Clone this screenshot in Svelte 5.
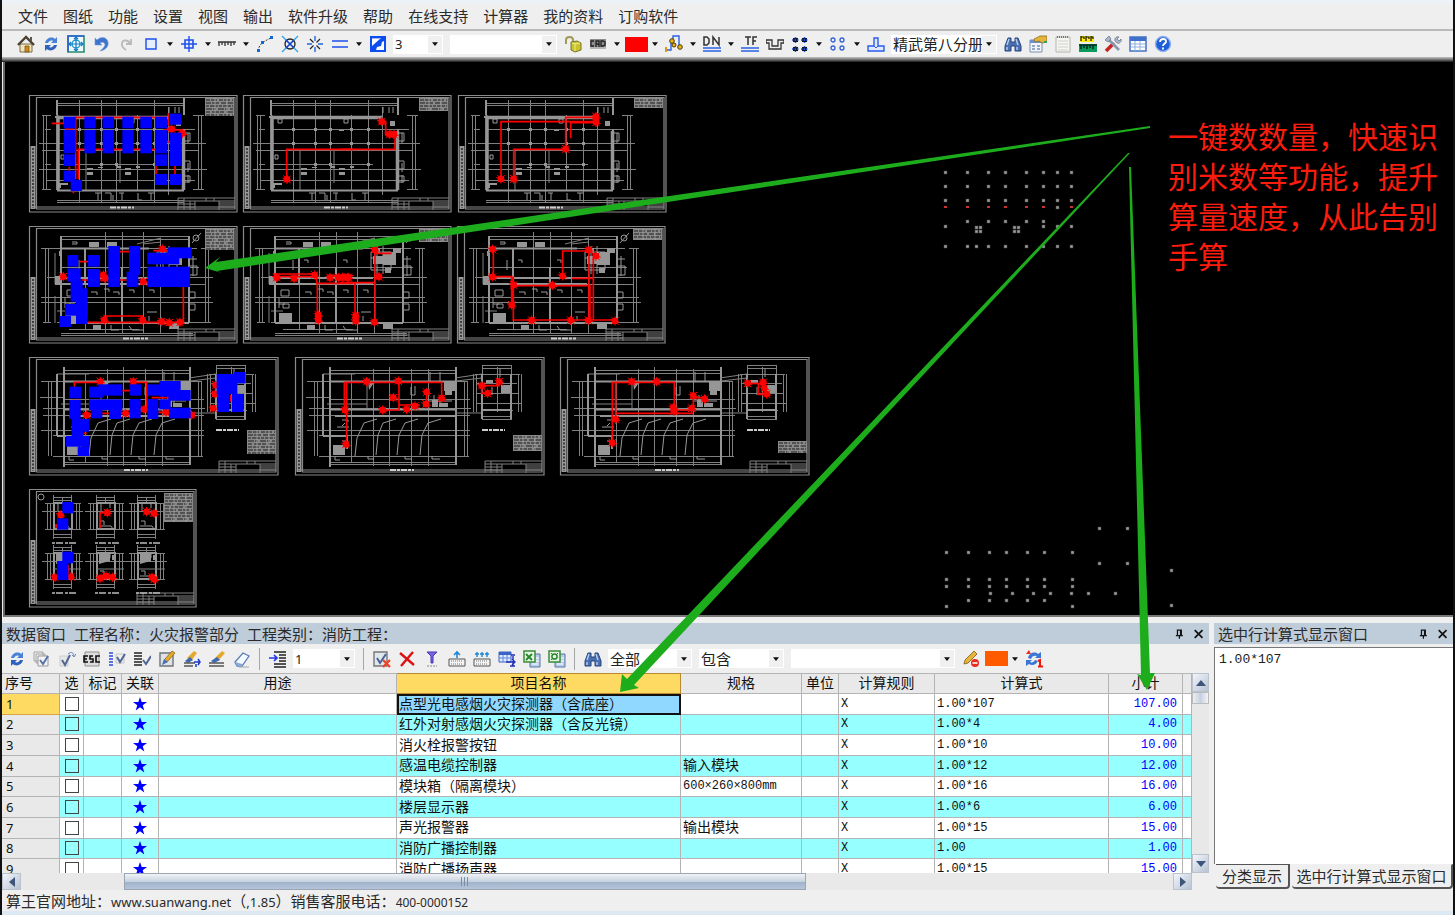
<script>
  const menus = ['文件', '图纸', '功能', '设置', '视图', '输出', '软件升级', '帮助', '在线支持', '计算器', '我的资料', '订购软件'];

  const icons = {
    home: '<path d="M3 9h12v8H3z" fill="#f3e3b8" stroke="#7a6a4a"/><path d="M1 10L9 2l8 8" fill="none" stroke="#4b4032" stroke-width="2.4"/><path d="M13 2h2v4h-2z" fill="#555"/><path d="M8 11h4v6H8z" fill="#d08a1c" stroke="#6b4a16" stroke-width=".7"/>',
    refresh: '<path d="M3 8c1-5 7-7 10-4l2-2v6H9l2-2c-2-1-4 0-5 2z" fill="#4a82d8"/><path d="M15 10c-1 5-7 7-10 4l-2 2v-6h6l-2 2c2 1 4 0 5-2z" fill="#2f62bd"/>',
    target: '<path d="M1 1h16v16H1z" fill="#eef8ff" stroke="#2a8c6a" stroke-width="1.6"/><path d="M1 17V1h16" fill="none" stroke="#2b62d8" stroke-width="1.6"/><circle cx="9" cy="9" r="4" fill="none" stroke="#1c9cc4" stroke-width="1.4"/><path d="M9 2v14M2 9h14M7 4l2-2 2 2M7 14l2 2 2-2M4 7L2 9l2 2M14 7l2 2-2 2" fill="none" stroke="#1478c8" stroke-width="1.2"/>',
    undo: '<path d="M3 3v7h7L8 8c3-2 5 0 5 2-1 3-3 4-5 6 6-1 9-5 8-9C15 2 9 1 5 5z" fill="#3f74cc" stroke="#6f98de" stroke-width=".6"/>',
    redo: '<path d="M14 4v5H9M13 9C12 5 6 4 5 8c-1 3 1 5 4 7" fill="none" stroke="#b9b9b9" stroke-width="1.8"/>',
    square: '<path d="M4 4h10v10H4z" fill="#e6eefc" stroke="#1c50ee" stroke-width="1.4"/>',
    cross: '<path d="M5 5h8v8H5z" fill="none" stroke="#1c50ee" stroke-width="1.6"/><path d="M9 1v16M1 9h16" stroke="#1c50ee" stroke-width="1.4"/>',
    ticks: '<path d="M0 7h18M1 7v4M4 7v3M7 7v4M10 7v3M13 7v4M16 7v3" stroke="#333" stroke-width="1.3"/>',
    curve: '<path d="M2 16c1-6 4-9 13-13" fill="none" stroke="#333" stroke-dasharray="2 1.4"/><path d="M1 14h3v3H1zM5 6h3v3H5zM14 1h3v3h-3z" fill="#1169d8"/>',
    circlex: '<path d="M1 1l16 16M17 1L1 17" stroke="#2ba2e8" stroke-width="1.2"/><circle cx="9" cy="9" r="5" fill="none" stroke="#222" stroke-width="1.3"/><path d="M5 5l8 8M13 5l-8 8" stroke="#1c40c8" stroke-width="1.4"/>',
    star: '<path d="M9 1v5M9 12v5M1 9h5M12 9h5" stroke="#1c6ae0" stroke-width="1.4"/><path d="M4 4l3.500 3.500M14 4l-3.500 3.500M4 14l3.500-3.500M14 14l-3.500-3.500" stroke="#222" stroke-width="1.2"/>',
    lines: '<path d="M1 6h16M1 12h16" stroke="#1c50ee" stroke-width="1.4"/>',
    diag: '<path d="M1 1h16v16H1z" fill="#0c4cf0"/><path d="M3 3h9L3 11z" fill="#fff"/><path d="M7 15l1-3 4-1 1-4 2-1v9z" fill="#fff"/><path d="M3 3h8v1H3z" fill="#0c4cf0" opacity=".4"/>',
    lock: '<path d="M2 9V5c0-4 7-4 7 0v3" fill="none" stroke="#a09a56" stroke-width="2"/><path d="M7 7l6-1 4 2v7l-6 2-4-2z" fill="#c9c22c" stroke="#77752c"/><path d="M11 9v7M8 8l3 1 5-1" stroke="#f1ee8c" fill="none"/>',
    cad: '<path d="M1 4h16v10H1z" fill="#8c8c8c"/><path d="M5 6H2v5h3M7 12V6h3v6M7 9h3M12 6v5h2l2-1V7l-2-1z" fill="none" stroke="#222" stroke-width="1.3"/><path d="M1 13h16" stroke="#ddd"/>',
    route: '<path d="M1 15h5V8M8 4V1h6v10h2" fill="none" stroke="#2b62e8" stroke-width="1.4"/><circle cx="7" cy="6" r="2.300" fill="#eab212" stroke="#4d3a08"/><circle cx="15" cy="12" r="2.300" fill="#eab212" stroke="#4d3a08"/><circle cx="9" cy="10" r="2" fill="#eab212" stroke="#4d3a08"/><path d="M1 12v5" stroke="#d89a10" stroke-width="2"/>',
    dn: '<path d="M1 2v8h3l2-2V4L4 2zM10 10V2l6 8V2" fill="none" stroke="#333" stroke-width="1.500"/><path d="M0 13h18M0 16h18" stroke="#2b62e8" stroke-width="1.300"/>',
    tf: '<path d="M4 2h6M7 2v8M12 10V2h4M12 6h3" fill="none" stroke="#333" stroke-width="1.500"/><path d="M0 13h18M0 16h18" stroke="#2b62e8" stroke-width="1.300"/>',
    pipe: '<path d="M0 5h6v6h6V5h6M0 8h3v6h12V8h3M0 5v3M18 5v3" fill="none" stroke="#333" stroke-width="1.300"/>',
    dots: '<path d="M2 3h5v4H2zM11 3h5v4h-5zM2 12h5v4H2zM11 12h5v4h-5z" fill="#111"/><path d="M1 5h7M10 5h7M1 14h7M10 14h7M4.500 2v6M13.500 2v6M4.500 11v6M13.500 11v6" stroke="#1b55e8" stroke-width="1.400" stroke-dasharray="1.500 1"/>',
    rings: '<g fill="#e8eefc" stroke="#3562cf" stroke-width="1.300"><circle cx="4" cy="5" r="2"/><circle cx="13" cy="5" r="2"/><circle cx="4" cy="13" r="2"/><circle cx="13" cy="13" r="2"/></g>',
    tee: '<path d="M7 3h4v8h6v5H1v-5h6z" fill="#dfe8ff" stroke="#2b5ce8" stroke-width="1.400"/><path d="M7 11l2 2 2-2" fill="none" stroke="#2b5ce8"/>',
    binoc: '<path d="M4 3h3v4h4V3h3l3 8v5h-6v-5H7v5H1v-5z" fill="#4a6fae" stroke="#24457f"/><path d="M3 10l2-6M12 4l2 6M3 12v3M13 12v3" stroke="#b9cdf0" stroke-width="1.400"/>',
    card: '<path d="M1 5h12v12H1z" fill="#f2f5fa" stroke="#7f8fae"/><path d="M1 5h12v3H1z" fill="#6e93cf"/><path d="M3 11h3M8 11h3M3 14h3M8 14h3" stroke="#7890b8" stroke-width="1.500"/><path d="M5 4l6-3h7v6l-5 1-3-2-4 1z" fill="#e3b53c" stroke="#8d6d1d" stroke-width=".8"/><path d="M15 6h3v2h-3z" fill="#3c9a5c"/>',
    page: '<path d="M2 2h14v15H2z" fill="#f5f5f1" stroke="#b4b4ac"/><path d="M3 2h12" stroke="#77776f" stroke-dasharray="1 1" stroke-width="2"/><path d="M4 6h10M4 9h10M4 12h10M4 15h10" stroke="#cfd2cc"/>',
    gauge: '<path d="M1 1h14v6H1z" fill="#ffee10"/><path d="M2 1v5M2 2h3v2M7 1v5M7 2h3v2M12 1v5M12 2h2v2" stroke="#111" fill="none" stroke-width="1.200"/><path d="M0 9h18v8H0z" fill="#0c9a5c"/><path d="M2 10v4M5 10v3M8 10v4M11 10v3M14 10v4M0 10h18" stroke="#032" stroke-width="1.600"/>',
    tools: '<path d="M2 16l8-8" stroke="#c92222" stroke-width="3.500"/><path d="M3 3l12 12" stroke="#8798ad" stroke-width="2.600"/><path d="M1 5l4-4 2 3-3 3zM11 6c-1-3 2-5 4-4l-2 2 2 2 2-2c1 3-2 5-4 4z" fill="#a9b8cc" stroke="#5f6f86" stroke-width=".7"/>',
    table: '<path d="M1 2h16v14H1z" fill="#fff" stroke="#4672c4" stroke-width="1.500"/><path d="M1 2h16v4H1z" fill="#3e70cc"/><path d="M2 9h14M2 12h14M6 6v10M11 6v10" stroke="#8faee0"/>',
    help: '<circle cx="9" cy="9" r="7.500" fill="#1f5fd8" stroke="#8fb2ee" stroke-width="1.400"/><path d="M6 7c0-4 7-4 6 0-1 2-3 2-3 4M9 12.500v2" fill="none" stroke="#fff" stroke-width="1.800"/>',
    copycheck: '<path d="M1 2h9v9H1zM3 4h9v9H3z" fill="#eee" stroke="#a5a5a5"/><path d="M5 6h10v10H5z" fill="#f4f4f4" stroke="#999"/><path d="M7 10l3 4 5-8" fill="none" stroke="#5474a8" stroke-width="2"/>',
    checkarrow: '<path d="M2 6h8v10H2z" fill="#e6e6e6" stroke="#ccc"/><path d="M4 10l3 5 5-10" fill="none" stroke="#4f6694" stroke-width="2"/><path d="M10 4c3-3 6-1 6 2M14 5l2 2 2-3" fill="none" stroke="#6d87b5"/>',
    esc: '<path d="M2 2h14v14H2z" fill="#ddd" stroke="#8f8f8f"/><path d="M5 6H1v6h4M1 9h3M10 6H7v3h3v3H7M17 6h-4v6h4" fill="none" stroke="#111" stroke-width="1.600"/>',
    listcheck: '<path d="M1 3h4M1 6h4M1 9h4M1 12h4M1 15h4" stroke="#2b48e8" stroke-width="1.600"/><path d="M8 4h8v9H8z" fill="#eee" stroke="#c4c4c4"/><path d="M9 7l3 5 5-8" fill="none" stroke="#4f6694" stroke-width="2"/>',
    linescheck: '<path d="M1 3h8M1 6h8M1 9h8M1 12h8M1 15h8" stroke="#222" stroke-width="1.600"/><path d="M10 10l3 4 5-8" fill="none" stroke="#4f6694" stroke-width="2"/>',
    editbox: '<path d="M2 3h13v13H2z" fill="#dfe3e6" stroke="#6f7478" stroke-width="1.400"/><path d="M5 14l2-5 7-8 3 2-7 8z" fill="#e6a82c" stroke="#7c5a16" stroke-width=".7"/><path d="M4 15l2-6 4 3z" fill="#4272b8"/>',
    brusharrow: '<path d="M4 8l7-7 3 2-6 8z" fill="#e6a82c"/><path d="M2 11l5-4 3 3-5 3z" fill="#3c68b4"/><path d="M1 13h11M1 16h9" stroke="#555" stroke-width="1.600"/><path d="M11 12h6M15 9l2 3-2 3M13 14v3" stroke="#2038c8" stroke-width="1.500" fill="none"/>',
    brush: '<path d="M7 8l7-7 3 2-7 8z" fill="#e6a82c"/><path d="M3 11l6-4 3 3-6 3z" fill="#3c68b4"/><path d="M1 13h15M1 16h15" stroke="#555" stroke-width="1.600"/>',
    eraser: '<path d="M2 12l8-9 6 3-7 10H4z" fill="#f4f8ff" stroke="#5d7fb5" stroke-width="1.300"/><path d="M2 12l7 2v2H4z" fill="#86a8da"/><path d="M6 17h10" stroke="#9aa"/>',
    indent: '<path d="M5 2h12M10 5h7M10 8h7M10 11h7M5 14h12M5 17h12" stroke="#222" stroke-width="1.500"/><path d="M0 8h7M5 5l3 3-3 3" fill="none" stroke="#2038e8" stroke-width="1.700"/>',
    checkx: '<path d="M1 2h13v14H1z" fill="#e1e6ec" stroke="#777" stroke-width="1.400"/><path d="M4 8l3 5 6-9" fill="none" stroke="#42629c" stroke-width="2"/><path d="M10 10l7 7M17 10l-7 7" stroke="#f04428" stroke-width="2.400"/>',
    del: '<path d="M2 3l14 12M15 2L3 16" stroke="#dc1212" stroke-width="2.400"/>',
    funnel: '<path d="M4 2h10l-4 4v7H8V6z" fill="#7a62e0" stroke="#4a34b8"/><path d="M4 16h10" stroke="#888" stroke-dasharray="2 1"/>',
    rowup: '<path d="M1 9h16v7H1z" fill="#f4f4f4" stroke="#555"/><path d="M3 11h12M3 14h12" stroke="#777" stroke-dasharray="1 1"/><path d="M9 8V2M6 5l3-3 3 3" fill="none" stroke="#1c86d8" stroke-width="1.600"/>',
    rowsup: '<path d="M1 9h16v7H1z" fill="#f4f4f4" stroke="#555"/><path d="M3 11h12M3 14h12" stroke="#777" stroke-dasharray="1 1"/><path d="M4 7V2M9 7V2M14 7V2M2 4h4M7 4h4M12 4h4" fill="none" stroke="#1c86d8" stroke-width="1.400"/>',
    gridmove: '<path d="M1 2h12v10H1z" fill="#dfe9ff" stroke="#3a62b8"/><path d="M1 2h12v3H1z" fill="#3a62c8"/><path d="M1 8h12M5 5v7M9 5v7" stroke="#6288d8"/><path d="M8 12h8M14 9l3 3-3 3M13 5h4M12 16h5M15 6v10" stroke="#2030b8" fill="none" stroke-width="1.400"/>',
    excelin: '<path d="M7 4h10v13H7z" fill="#b9cdea" stroke="#5579a8"/><path d="M13 8h3M13 11h3M9 14h6" stroke="#fff"/><path d="M1 1h11v11H1z" fill="#e6f4e2" stroke="#3a8a3a" stroke-width="1.500"/><path d="M3 4l6 6M9 4l-6 6" stroke="#25852c" stroke-width="1.800"/>',
    excelout: '<path d="M7 4h10v13H7z" fill="#b9cdea" stroke="#5579a8"/><path d="M13 8h3M13 11h3M9 14h6" stroke="#fff"/><path d="M1 1h11v11H1z" fill="#e6f4e2" stroke="#3a8a3a" stroke-width="1.500"/><circle cx="6.500" cy="6.500" r="2.600" fill="none" stroke="#25852c" stroke-width="1.500"/><path d="M3 3l2 2M10 3L8 5M3 10l2-2" stroke="#25852c"/>',
    pencilno: '<path d="M2 14l1-4 9-9 3 3-9 9z" fill="#e6b53a" stroke="#7c5a16" stroke-width=".8"/><circle cx="13" cy="13" r="4" fill="#e82c20"/><path d="M10.500 13h5" stroke="#fff" stroke-width="1.600"/>',
    refreshone: '<path d="M3 8c1-5 7-7 10-4l3-2v6h-6l2-2C9 5 7 6 6 9zM13 11c-2 4-6 5-9 3l-3 2v-6h6l-2 2c2 1 4 0 5-2z" fill="#3a76d4"/><path d="M1 4l3-4 2 4z" fill="#e82c20"/><path d="M13 11l2-1v6M13 16.500h5" fill="none" stroke="#e81c10" stroke-width="2"/>',
    pin: '<path d="M7 4h5v7H7zM5 11h9M9.500 11v4M11 4v7" fill="none" stroke="#111" stroke-width="1.600"/>',
    close: '<path d="M3.500 4l10 10M13.500 4l-10 10" stroke="#111" stroke-width="2.200"/>'
  };

  const bar1 = [
    { i: 'home', t: '主页' }, { i: 'refresh', t: '刷新' }, { i: 'target', t: '全图' }, { i: 'undo', t: '撤销' }, { i: 'redo', t: '重做' },
    { i: 'square', t: '矩形', d: 1 }, { i: 'cross', t: '定位', d: 1 }, { i: 'ticks', t: '标尺', d: 1 }, { i: 'curve', t: '曲线' },
    { i: 'circlex', t: '交点' }, { i: 'star', t: '打断' }, { i: 'lines', t: '平行线', d: 1 }, { i: 'diag', t: '缩放' },
    { sel: ['3'], w: 50, t: '线宽' }, { sel: [''], w: 107, t: '图层' },
    { i: 'lock', t: '解锁' }, { i: 'cad', t: 'CAD', d: 1 }, { color: '#ff0000', t: '颜色', d: 1 }, { i: 'route', t: '管线', d: 1 },
    { i: 'dn', t: 'DN', d: 1 }, { i: 'tf', t: 'TF' }, { i: 'pipe', t: '桥架' }, { i: 'dots', t: '阵列', d: 1 }, { i: 'rings', t: '数量', d: 1 }, { i: 'tee', t: '三通' },
    { sel: ['精武第八分册'], w: 106, t: '分册' },
    { i: 'binoc', t: '查找' }, { i: 'card', t: '属性' }, { i: 'page', t: '记事' }, { i: 'gauge', t: '比例' }, { i: 'tools', t: '工具' }, { i: 'table', t: '表格' }, { i: 'help', t: '帮助' }
  ];
  const bar2 = [
    { i: 'refresh', t: '刷新' }, { i: 'copycheck', t: '全选' }, { i: 'checkarrow', t: '反选' }, { i: 'esc', t: 'ESC' }, { i: 'listcheck', t: '列选' },
    { i: 'linescheck', t: '行选' }, { i: 'editbox', t: '编辑' }, { i: 'brusharrow', t: '格式刷' }, { i: 'brush', t: '刷' }, { i: 'eraser', t: '清除' },
    { sep: 1 }, { i: 'indent', t: '缩进' }, { sel: ['1'], w: 62, t: '级别' }, { sep: 1 },
    { i: 'checkx', t: '取消选择' }, { i: 'del', t: '删除' }, { i: 'funnel', t: '筛选' }, { i: 'rowup', t: '插入行' }, { i: 'rowsup', t: '插入多行' },
    { i: 'gridmove', t: '移动' }, { i: 'excelin', t: '导入' }, { i: 'excelout', t: '导出' }, { sep: 1 }, { i: 'binoc', t: '查找' },
    { sel: ['全部'], w: 84, t: '范围' }, { sel: ['包含'], w: 85, t: '条件' }, { sel: [''], w: 164, t: '关键字' },
    { i: 'pencilno', t: '禁止编辑' }, { color: '#ff5a00', t: '标记颜色', d: 1 }, { i: 'refreshone', t: '重算' }
  ];

  const rows = [
    ['点型光电感烟火灾探测器（含底座）', '', '1.00*107', '107.00'],
    ['红外对射感烟火灾探测器（含反光镜）', '', '1.00*4', '4.00'],
    ['消火栓报警按钮', '', '1.00*10', '10.00'],
    ['感温电缆控制器', '输入模块', '1.00*12', '12.00'],
    ['模块箱（隔离模块）', '600×260×800mm', '1.00*16', '16.00'],
    ['楼层显示器', '', '1.00*6', '6.00'],
    ['声光报警器', '输出模块', '1.00*15', '15.00'],
    ['消防广播控制器', '', '1.00', '1.00'],
    ['消防广播扬声器', '', '1.00*15', '15.00']
  ];

  // Blue detector blocks per drawing area: x1, y1, x2, y2 in thirds of a pixel.
  const blueUpper = [
    [131,95,167,130],[131,135,167,205],[131,208,165,243],[131,257,165,290],[152,285,186,318],[193,95,227,130],[193,135,227,205],
    [248,95,282,130],[248,135,282,205],[307,95,341,130],[307,135,341,205],[361,95,396,130],[361,135,396,205],[405,95,441,130],
    [405,135,441,205],[405,208,441,243],[405,267,441,300],[450,86,485,119],[450,143,485,243],[450,267,485,300],
    [142,510,175,545],[142,550,182,590],[152,588,188,612],[152,610,203,650],[135,657,203,692],[118,693,153,726],[168,648,203,717],[204,510,240,545],
    [204,552,240,606],[265,483,300,606],[327,483,361,570],[320,560,355,606],[382,503,478,538],[443,487,515,520],[382,545,510,606]
  ];
  const blueLower = [
    [148,110,184,145],[148,150,182,207],[155,207,207,245],[155,240,190,260],[138,258,207,290],[173,290,207,318],[207,110,250,143],[235,103,307,137],
    [207,148,307,180],[213,180,247,205],[268,180,303,207],[329,103,364,137],[329,147,362,205],[382,103,420,137],[382,147,415,207],
    [418,93,482,140],[445,120,512,152],[418,148,452,178],[447,173,512,205],[590,72,652,132],[642,66,677,100],[592,132,628,186],[636,132,671,186],
    [127,456,161,490],[111,505,145,539],[127,605,161,640],[111,633,145,690]
  ];

  const redUpperA = 'M95 115H165M167 283V97H440M175 283V193H405M445 85V120M430 135H490M148 245V257M465 243V267M408 243V267M160 318V325M135 132H160M440 132H460M440 170H450M800 283V193H1000M178 530H204M185 585H265M203 712H490V606M250 693H370M300 500H327M300 585H320M360 592H382M400 497H445M760 567H890V595H1000M892 595V705M768 575H884M925 572H1000';
  const redUpperB = 'M0 193H165V150H137V110H125M483 283V110H768M521 283V193H677V97H768M692 160V113H768M0 593H105V495M105 593V710M45 593V700M105 505H155M460 493V575H515V660M520 575V705H827M520 602H750V705M668 575V498H747V705M760 515V707M695 580H760';
  const redLowerA = 'M163 110V97H240M340 97H380V180M307 122H330M395 143H448M193 192H215M155 152H180M245 190H268M303 190H330M415 187H445M190 250H200M632 135V155M973 97V180M980 97V285M973 97H1200M1137 97V180H1088M1137 165H1200M240 535V488H262M108 522V535M145 645V670';
  const redLowerB = 'M0 97H65V145M20 125V160M185 107H238V90M185 107V130H205M577 280V97H763V180H820V143H850M587 97V208M587 190H820M983 100H1030M1015 100V133H1040';
  const nodesUpperA = [[455,132],[487,145],[801,283],[130,575],[250,570],[255,580],[370,590],[428,492],[253,705],[368,705],[425,710],[448,713],[480,712],[770,578],[822,580],[884,570],[930,578],[955,578],[983,578],[895,690],[895,705]];
  const nodesUpperB = [[125,110],[148,148],[162,148],[483,282],[521,282],[677,192],[768,95],[768,112],[8,577],[25,577],[105,495],[117,575],[47,692],[47,708],[103,711],[458,493],[457,576],[521,600],[515,660],[668,573],[637,601],[747,495],[768,513],[575,706],[692,706],[745,706],[825,708]];
  const nodesLowerA = [[241,95],[340,95],[372,178],[317,190],[438,187],[200,195],[515,195],[587,105],[585,132],[580,175],[975,180],[978,283],[1040,95],[1135,93],[1120,143],[1088,180],[1160,178],[1185,168],[122,495],[262,488],[380,485],[402,490],[105,682],[153,680],[240,685],[258,678],[278,682],[396,682],[403,688]];
  const nodesLowerB = [[20,127],[18,162],[65,145],[185,107],[238,95],[203,130],[577,278],[587,208],[635,95],[710,95],[760,172],[762,184],[815,175],[820,137],[854,147],[983,100],[1030,97],[1033,115],[1040,132]];

  const cols = [945, 967, 988, 1005, 1026, 1043, 1057, 1071];
  const specks = [
    ...[172, 186, 200, 246].flatMap((y) => cols.map((x) => [x, y])),
    [967,221],[988,221],[1005,221],[1026,221],[1043,221],[945,226],[1057,226],[1071,226],[1043,226],
    [976,227],[980,227],[976,231],[980,231],[1014,227],[1018,227],[1014,231],[1018,231],[976,246],[1057,207],
    ...[946, 968, 989, 1006, 1027, 1044, 1072].flatMap((x) => [[x, 552], [x, 579], [x, 586]]),
    [990,593],[1012,593],[1033,593],[1050,593],[1071,593],[1088,593],[1115,593],[968,600],[989,600],[1006,600],[1027,600],[1044,600],
    [946,606],[1072,606],[1099,528],[1127,528],[1099,563],[1127,563],[1171,570],[1171,605]
  ];

  const stampDashes = ['4 1 6 2', '5 1 7 2', '3 1 8 1', '6 1 3 2', '4 2 7 1'];
  const stampLines = (h) => Array.from({ length: Math.floor(h / 3) }, (_, n) => 2 + n * 3);
</script>

{#snippet caret()}<svg class="caret" viewBox="0 0 8 5" aria-hidden="true"><path d="M0 0h8L4 5z" /></svg>{/snippet}

{#snippet tools(items)}
  {#each items as it}
    {#if it.sep}
      <span class="sep"></span>
    {:else if it.sel}
      <span class="combo" class:digits={it.w < 70} style="width:{it.w}px">
        <select aria-label={it.t}>{#each it.sel as o}<option>{o}</option>{/each}</select>
        <span class="arrow">{@render caret()}</span>
      </span>
    {:else}
      <button class="tool" class:drop={it.d} title={it.t} aria-label={it.t}>
        {#if it.color}
          <span class="swatch" style="background:{it.color}"></span>
        {:else}
          <span class="pic"><svg viewBox="0 0 18 18" aria-hidden="true">{@html icons[it.i]}</svg></span>
        {/if}
        {#if it.d}<span class="down">{@render caret()}</span>{/if}
      </button>
    {/if}
  {/each}
{/snippet}

{#snippet sheet(x, y, w, h, strip)}
  <g transform="translate({x} {y})">
    <path class="frame" d="M.5 .5H{w}V{h}H.5zM7.500 2.500H{w - 2}V{h - 3}H7.500zM2 {h - 5}H{w - 2}" />
    <path d="M4 {strip}V{h - 3}" stroke="#999" stroke-width="5" />
    <path d="M4 {strip + 2}V{h - 4}" stroke="#222" stroke-width="1.500" stroke-dasharray="2 1.500" />
    <g transform="translate({w - 59} {h - 14})">
      <path class="ln" d="M0 0H57M0 3H57M0 6H17M0 9H17M41 5H57M41 7H57M41 9H57M17 3V12M41 3V12M6 0V12M12 3V12M0 0V12M28 0V3M36 0V3" />
    </g>
  </g>
{/snippet}

{#snippet stamp(x, y, h)}
  <g transform="translate({x} {y})">
    <path d="M0 {h / 2}H29" stroke="#888" stroke-width={h} />
    {#each stampLines(h) as ly, n}
      <path d="M1 {ly}H28" stroke="#1c1c1c" stroke-dasharray={stampDashes[n % 5]} />
    {/each}
    <path d="M10 0V{h}M22 0V{h}" stroke="#aaa" stroke-width=".8" />
  </g>
{/snippet}

{#snippet planA(x, y)}
  <g transform="translate({x} {y})">
    <path class="ln" d="M28 8.500H155M28 10.500H155M28 34.500H166M10 48.500H177M13 55.500H170M28 69.500H130M10 74.500H178M18 85.500H166M28 105.500H155M28 107.500H155M16 34.500H22M16 69.500H22M50.500 5V108M72.500 5V108M87.500 5V108M108.500 20V95M125.500 5V108M139.500 12V100M14.500 20V95M17.500 20V95M169.500 20V95M172.500 20V95M13 20.500H22M164 20.500H175M164 94.500H175M13 94.500H22M57 55V95M91 56V88" />
    <path class="wall" d="M28.500 20V95M26 22H139M28 95.500H155M155 34V95" />
    <path class="wall" d="M28 5V20M155 3V20" />
    <path d="M29 22V95M28 22.500H139M154.500 36V95" stroke="#969696" stroke-width="3.500" />
    <path class="blob" d="M58 73h6v2h-6zM58 77h6v3h-6zM96 73h6v2h-6zM96 77h6v3h-6zM69 72h5v1h-5zM88 71h4v2h-4zM107 71h4v2h-4zM96 35h5v1h-5zM28 88h11v2h-7v3h-4zM147 26h5v5h-5z" />
    <path class="det" d="M66 98h6M69 98v7M76 98h6v7M84 100v5M90 98h5M93 98v7M109 98v7h4M119 98h6M122 98v7M140 12v6M146 12v6M150 12v6M155 38h6v8h-6M155 66h6v8h-6M155 81h6v6h-6M35 24h4v4h-4zM101 24h4v4h-4zM32 60h3v4h-3zM159 38v10M159 68v9M159 80v8" />
    <path d="M81 112.500h24" stroke="#ccc" stroke-width="2" stroke-dasharray="6 1 3 1" />
    <path class="blob" d="M49 33h3v3h-3zM71 33h3v3h-3zM86 33h3v3h-3zM107 33h3v3h-3zM124 33h3v3h-3zM49 47h3v3h-3zM71 47h3v3h-3zM86 47h3v3h-3zM107 47h3v3h-3zM124 47h3v3h-3zM71 68h3v3h-3zM86 68h3v3h-3zM124 68h3v3h-3z" />
  </g>
{/snippet}

{#snippet planB(x, y)}
  <g transform="translate({x} {y})">
    <path class="ln" d="M32 10.500H160M32 13.500H160M12 22.500H168M32 41.500H170M18 51.500H184M32 58.500H176M12 71.500H182M12 76.500H184M28 96.500H177M40 103.500H110M32 107.500H164M32 109.500H164M56.500 22V103M76.500 6V108M93.500 6V108M114.500 6V108M131.500 12V108M16.500 22V97M19.500 22V97M176.500 22V97M179.500 22V97M14 22.500H22M172 22.500H182M14 96.500H22M172 96.500H182M26 27V58M26 70V97M28 85H40M108 18l24-6M114 18l18-2" />
    <path class="wall" d="M32 10V97M32 22.500H120M32 52H130M32 58H130M32 97H160M160 10V97M56 22V58M93 41V97" />
    <path class="blob" d="M26 50h7v9h-7zM36 87h13v9h-13zM60 16h10v5h-10zM78 16h10v5h-10zM130 30h10v8h-10zM140 26h13v13h-13zM142 42h6v5h-6zM150 22h8v5h-8zM140 97h10v6h-10zM64 99h8v5h-8zM30 25h3v5h-3zM132 22h5v5h-5z" />
    <path class="det" d="M128 26h20v18h-20zM134 20v28M140 20v28M128 32h24M130 36h22M36 72v6h6M36 78v4M61 34h4v3M100 34h4v3M75 63h5v3M100 64h5v3M120 64h5v3M160 40h8v9h-8M161 66h5v6h-5M161 78h5v6h-5M43 16h5v2h-5M82 99v5h8M100 100l3 4h12M160 33h8M50 34v10M38 64h8v6h-8zM40 78h6v4h-6zM62 66h6v3M84 66h6v3M118 86h10M120 90v5M164 30v20" />
    <circle cx="167" cy="12" r="3" class="det" /><path class="det" d="M163 17l9-10" />
    <path d="M94 112.500h25" stroke="#ccc" stroke-width="2" stroke-dasharray="6 1 3 1" />
  </g>
{/snippet}

{#snippet planC(x, y)}
  <g transform="translate({x} {y})">
    <path class="ln" d="M35 13.500H161M35 16.500H161M12 24.500H172M11 40.500H35M35 42.500H175M14 51.500H176M14 58.500H175M12 73.500H175M24 78.500H175M24 99.500H174M35 105.500H161M35 107.500H161M56.500 16V106M78.500 12V109M94.500 10V109M116.500 12V109M133.500 12V109M19.500 24V99M22.500 24V99M169.500 24V99M172.500 24V99M28 17H60M28 17V79H36M28 17V50M72 24V52M32 47h40" />
    <path class="wall" d="M35 10V110M35 24.500H161M35 52.500H161M40 59H161M161 10V108M28 79H52V92M28 17V79M35 24V52" />
    <path class="ln" d="M187.500 8V63M216.500 8V63M187 8.500H217M187 11.500H217M180 17.500H225M182 26.500H222M182 36.500H224M182 46.500H226M187 53.500H218M187 59.500H217M187 62.500H217M178.500 17V55M181.500 17V55M223.500 17V55M226.500 17V55M202.500 10V55M160 21l27-4M161 24l26-3M160 56h27" />
    <path class="wall" d="M187 17V62M216 17V62M187 53H216" />
    <path class="blob" d="M38 88h12v10h-12zM149 25h12v9h-12zM150 34h7v4h-7zM73 24h11l-6 3-4 6zM137 43h6v7h-6zM144 46h9v4h-9zM206 28h9v8h-9zM191 23h7v3h-7z" />
    <path class="det" d="M101 62l-13 4-5 12-2 20M82 62l-13 4-7 15-2 18M123 62l-13 4-6 12-2 20M146 62l-13 4-6 12-2 20M47 63h6v2M50 66l-3 3M42 70h12M47 84h5l-3 4M40 99v4h5M73 99v3h6M110 99v3h7M137 99v3h8M139 38v12M145 38v12M133 44h24M135 15v10M145 15v10M205 12v8M197 30v8M116 30v8h4v-9" />
    <path d="M95 113h24M187 73h23" stroke="#ccc" stroke-width="2" stroke-dasharray="6 1 3 1" />
  </g>
{/snippet}

{#snippet mini(x, y, dense)}
  <g transform="translate({x} {y})">
    <path class="ln" d="M8 2.500H27M8 5.500H27M8 39.500H27M8 42.500H27M2.500 8V34M5.500 8V34M31.500 8V34M34.500 8V34M0 8.500H10M26 8.500H36M-3 16.500H38M0 34.500H36M8.500 0V44M26.500 0V44M17.500 2V8" />
    <path class="wall" d="M9 8V34H27V8z" />
    <path class="det" d="M13 8v8M22 8v5M11 31h12l2 3M12 26h4v4" />
    {#if dense}<path class="blob" d="M11 9h11v7l-4 1-7 2zM24 10h3v5h-3z" /><path class="ln" d="M9 24H36" />{/if}
    <path d="M7 48h26" stroke="#bbb" stroke-width="1.500" stroke-dasharray="3 1 7 2" />
  </g>
{/snippet}

{#snippet devices(tx, ty, line, nodes, blues)}
  <g transform="translate({tx} {ty}) scale(.33333)">
    <path class="run" d={line} />
    {#each nodes as [x, y]}
      <g transform="translate({x} {y})"><circle r="10" fill="#f00" /><path d="M-14 -4L14 4M-11 -12L11 12M0 -14V14M11 -11L-11 11" stroke="#f00" stroke-width="3" /></g>
    {/each}
    {#each blues as [x1, y1, x2, y2]}<rect x={x1} y={y1} width={x2 - x1} height={y2 - y1} fill="#00f" />{/each}
  </g>
{/snippet}

<div class="app">
  <nav class="menu" aria-label="主菜单">
    {#each menus as m}<button>{m}</button>{/each}
  </nav>
  <div class="toolbar top">{@render tools(bar1)}</div>
  <div class="edge"></div>

  <section class="canvas">
    <svg class="drawing" aria-label="图纸">
      <g transform="translate(-2 -62)">
        {#each [29, 243, 458] as x, n}
          {@render sheet(x, 95, 208, 117, 51)}
          {@render planA(x, 95)}
          {@render stamp(x + 176, 98, [18, 13, 10][n])}
        {/each}
        {#each [29, 243, 457] as x, n}
          {@render sheet(x, 226, 208, 117, 51)}
          {@render planB(x, 226)}
          {@render stamp(x + 176, 229, [21, 13, 11][n])}
        {/each}
        {#each [29, 295, 560] as x, n}
          {@render sheet(x, 357, 249, 118, 52)}
          {@render planC(x, 357)}
          {@render stamp(x + 218, [430, 435, 441][n], [24, 16, 12][n])}
        {/each}
        {@render sheet(29, 489, 167, 118, 51)}
        {@render stamp(164, 493, 29)}
        {#each [45, 88, 129] as x}
          {@render mini(x, 495, false)}
          {@render mini(x, 545, true)}
        {/each}
        <circle cx="41" cy="497" r="3" class="det" />
        {@render devices(20, 85, redUpperA, nodesUpperA, blueUpper)}
        {@render devices(340, 85, redUpperB, nodesUpperB, [])}
        {@render devices(20, 350, redLowerA, nodesLowerA, blueLower)}
        {@render devices(420, 350, redLowerB, nodesLowerB, [])}
        {#each specks as [x, y]}<rect x={x - 1} y={y - 1} width="3" height="3" fill="#999" stroke="#444" stroke-width=".5" />{/each}
        {#each cols.filter((c) => c !== 1057) as x}<rect x={x - 1} y="206" width="3" height="2" fill="#c33" />{/each}
      </g>
    </svg>
    <p class="note">一键数数量，快速识别米数等功能，提升算量速度，从此告别手算</p>
  </section>

  <div class="docks">
    <section class="data">
      <header class="title">
        <span>数据窗口</span><span>工程名称：火灾报警部分</span><span>工程类别：消防工程：</span>
        <span class="wins">
          <button aria-label="固定"><svg viewBox="0 0 18 18">{@html icons.pin}</svg></button>
          <button aria-label="关闭"><svg viewBox="0 0 18 18">{@html icons.close}</svg></button>
        </span>
      </header>
      <div class="toolbar">{@render tools(bar2)}</div>
      <div class="gridrow">
        <div class="tablebox">
          <table>
            <colgroup>
              <col style="width:58px" /><col style="width:24px" /><col style="width:38px" /><col style="width:37px" /><col />
              <col style="width:284px" /><col style="width:121px" /><col style="width:37px" /><col style="width:96px" />
              <col style="width:174px" /><col style="width:74px" /><col style="width:9px" />
            </colgroup>
            <thead>
              <tr>
                <th class="first">序号</th><th>选</th><th>标记</th><th>关联</th><th>用途</th><th class="on">项目名称</th>
                <th>规格</th><th>单位</th><th>计算规则</th><th>计算式</th><th>小计</th><th></th>
              </tr>
            </thead>
            <tbody>
              {#each rows as r, n}
                <tr class:current={n === 0}>
                  <td class="no">{n + 1}</td>
                  <td class="mid"><input type="checkbox" aria-label="选 {n + 1}" /></td>
                  <td></td>
                  <td class="mid"><svg class="mark" viewBox="0 0 14 14" aria-label="关联"><path d="M7 0l1.700 5H14l-4.300 3.200L11.300 13.500 7 10.300 2.700 13.500 4.300 8.200 0 5h5.300z" /></svg></td>
                  <td></td>
                  <td class="name">{r[0]}</td>
                  <td class:han={!r[1].includes('mm')}>{r[1]}</td>
                  <td></td>
                  <td>X</td>
                  <td>{r[2]}</td>
                  <td class="sum">{r[3]}</td>
                  <td></td>
                </tr>
              {/each}
            </tbody>
          </table>
        </div>
        <div class="vbar">
          <button aria-label="向上"><svg viewBox="0 0 10 6"><path d="M0 6h10L5 0z" /></svg></button>
          <span class="vthumb"></span>
          <button class="end" aria-label="向下"><svg viewBox="0 0 10 6"><path d="M0 0h10L5 6z" /></svg></button>
        </div>
      </div>
      <div class="hbar">
        <button aria-label="向左"><svg class="side" viewBox="0 0 6 10"><path d="M6 0v10L0 5z" /></svg></button>
        <span class="track"><span class="hthumb"><i></i></span></span>
        <button aria-label="向右"><svg class="side" viewBox="0 0 6 10"><path d="M0 0v10l6-5z" /></svg></button>
        <span class="corner"></span>
      </div>
    </section>

    <aside>
      <header class="title">
        <span>选中行计算式显示窗口</span>
        <span class="wins">
          <button aria-label="固定"><svg viewBox="0 0 18 18">{@html icons.pin}</svg></button>
          <button aria-label="关闭"><svg viewBox="0 0 18 18">{@html icons.close}</svg></button>
        </span>
      </header>
      <textarea aria-label="计算式" spellcheck="false">1.00*107</textarea>
      <div class="tabs"><button>分类显示</button><button class="open">选中行计算式显示窗口</button></div>
    </aside>
  </div>

  <footer>算王官网地址：<span>www.suanwang.net</span>（<span>,1.85</span>）销售客服电话：<span class="phone">400-0000152</span></footer>

  <svg class="arrows" aria-hidden="true">
    <path d="M205 268L220 257 216 262 1150 126 1150 128 217 271 222 273z" />
    <path d="M620 692L622 674 627 679 1128 153 1130 153 634 685 639 688z" />
    <path d="M1147 690L1137 674 1141 675 1129 167 1131 167 1150 673 1155 673z" />
  </svg>
</div>

<style>
  :global(body) { margin: 0; background: #efefef; }
  .app {
    position: relative; box-sizing: border-box; min-height: 100vh; display: flex; flex-direction: column;
    border: solid #111; border-width: 0 2px; background: #efefef; color: #2a2a2a;
    font: 15px/20px "Noto Sans", "Noto Sans CJK SC", sans-serif;
  }
  button, select, textarea { font: inherit; color: inherit; }
  button { border: 0; padding: 0; background: none; }
  .menu {
    display: flex; gap: 15px; padding: 2px 16px 3px; border-top: 4px solid #edf2f9; border-bottom: 2px solid #b9bbba;
    height: 20px;
  }
  .menu button { flex: none; white-space: nowrap; line-height: 18px; }
  .toolbar { display: flex; align-items: center; height: 29px; padding: 0 2px; }
  .toolbar.top { height: 26px; padding: 0 11px; }
  .edge { height: 5px; background: linear-gradient(#c4c4c4, #777 50%, #1a1a1a); }
  .tool { flex: none; display: flex; align-items: center; width: 25px; height: 24px; }
  .tool.drop { width: 38px; }
  .pic { width: 25px; display: flex; justify-content: center; }
  .pic svg { width: 18px; height: 18px; }
  .swatch { width: 23px; height: 15px; margin-left: 2px; }
  .down { width: 13px; display: flex; justify-content: center; }
  .caret { display: block; width: 6px; height: 4px; fill: #111; }
  .sep { flex: none; width: 1px; height: 22px; margin: 0 5px; background: #a5a5a5; }
  .combo { position: relative; flex: none; height: 19px; margin: 0 3px; background: #fff; }
  .combo + .combo { margin-left: 4px; }
  .combo select { appearance: none; display: block; width: 100%; height: 19px; border: 0; padding: 0 0 0 2px; background: none; line-height: 18px; color: #222; }
  .combo.digits select { font-size: 13px; }
  .arrow { position: absolute; right: 1px; top: 1px; width: 14px; height: 17px; display: flex; align-items: center; justify-content: center; background: #f0f0f0; pointer-events: none; }
  .canvas { position: relative; flex: 1; background: #000; overflow: hidden; min-height: 300px; border-left: 2px solid #666; margin-left: 1px; border-bottom: 2px solid #777; }
  .drawing { position: absolute; left: -3px; top: 0; width: 100%; height: 100%; }
  .frame { fill: none; stroke: #8a8a8a; stroke-width: 1.2; }
  .ln { fill: none; stroke: #808080; stroke-width: 1; }
  .wall { fill: none; stroke: #969696; stroke-width: 2; }
  .det { fill: none; stroke: #999; stroke-width: 1; }
  .blob { fill: #969696; }
  .run { fill: none; stroke: #f00; stroke-width: 5; }
  .note { position: absolute; right: 5px; top: 53px; width: 280px; margin: 0; color: #fb1c0e; font-size: 30px; line-height: 40px; font-family: "Noto Sans CJK SC", sans-serif; }
  .arrows { position: absolute; left: -2px; top: 0; width: 100%; height: 100%; fill: #1cac1c; pointer-events: none; overflow: visible; }

  .docks { display: flex; gap: 5px; padding-top: 6px; }
  .data { flex: 1; min-width: 0; }
  .title { display: flex; gap: 8px; align-items: center; height: 21px; line-height: 18px; padding: 0 0 0 4px; background: #bfccda; white-space: nowrap; overflow: hidden; }
  .wins { margin-left: auto; display: flex; }
  .wins button { display: flex; align-items: center; justify-content: center; width: 20px; height: 18px; }
  .wins svg { width: 14px; height: 14px; }
  .gridrow { display: flex; height: 200px; }
  .tablebox { flex: 1; min-width: 0; overflow: hidden; }
  table { width: 100%; height: 207px; table-layout: fixed; border-collapse: separate; border-spacing: 0; font: 14px/18px "Liberation Mono", "Noto Sans CJK SC", monospace; color: #111; }
  th, td { box-sizing: border-box; padding: 0 1px; border: solid #b4b4b4; border-width: 0 1px 1px 0; overflow: hidden; white-space: nowrap; font-weight: 400; }
  th { height: 21px; background: #e9e9e9; border-top-width: 1px; }
  th.first { text-align: left; padding-left: 3px; }
  th.on { background: #ffda62; border-color: #b98a30; }
  tbody td { background: #fff; padding-left: 2px; font-size: 12px; }
  tbody tr:nth-child(even) td { background: #96ffff; }
  tbody tr td.no { background: #e9e9e9; font: 13px/18px "Noto Sans", sans-serif; padding-left: 4px; }
  tbody td.name, tbody td.han { font: 14px/16px "Noto Sans CJK SC", sans-serif; padding-bottom: 3px; }
  tbody tr.current td.no { background: #ffda62; border-color: #d9a441; }
  tbody tr.current td.name { background: #90d8ff; border: 2px solid #111; padding: 0 0 2px; line-height: 14px; }
  tbody td.mid { text-align: center; padding: 0; }
  tbody td.sum { text-align: right; color: #00f; padding-right: 5px; }
  input[type='checkbox'] { appearance: none; display: block; box-sizing: border-box; width: 14px; height: 14px; margin: 0 auto; border: 1px solid #444; }
  .mark { display: block; width: 14px; height: 14px; margin: 0 auto; fill: #00f; }
  .vbar { width: 17px; display: flex; flex-direction: column; background: #e8e8e8; }
  .vbar button, .hbar button { flex: none; display: flex; align-items: center; justify-content: center; box-sizing: border-box; width: 17px; height: 19px; border: 1px solid #bbc2cc; background: linear-gradient(135deg, #f2f5fa, #b7c3d4); }
  .vbar svg { width: 10px; height: 6px; fill: #3e5478; }
  .vthumb { height: 10px; border: 1px solid #bbb; background: linear-gradient(90deg, #eee, #c5d1e2, #f4f4f4); }
  .vbar .end { margin-top: auto; }
  .hbar { display: flex; height: 17px; background: #e9e9e9; }
  .hbar button { width: 19px; height: 17px; }
  .hbar .side { width: 6px; height: 10px; fill: #3e5478; }
  .track { flex: 1; display: flex; padding-left: 103px; }
  .hthumb { width: 65%; box-sizing: border-box; border: 1px solid #9aa6b5; background: linear-gradient(#f1f3f6, #c7d2e0 50%, #9fb3cb 55%, #b5c5d8); display: flex; align-items: center; justify-content: center; }
  .hthumb i { width: 8px; height: 9px; background: repeating-linear-gradient(90deg, #7d8da4 0 1px, transparent 1px 3px); }
  .corner { width: 17px; background: #efefef; }

  aside { width: 239px; display: flex; flex-direction: column; }
  textarea { flex: 1; box-sizing: border-box; width: 100%; margin: 3px 0 0; padding: 3px 4px; border: solid #777; border-width: 1px 0 0 1px; background: #fff; resize: none; outline: 0; font: 13px/18px "Liberation Mono", monospace; color: #222; }
  .tabs { display: flex; gap: 2px; padding: 0 0 1px 2px; height: 25px; line-height: 18px; white-space: nowrap; overflow: hidden; }
  .tabs button { flex: none; padding: 0 6px; border: solid #555; border-width: 1px 2px 2px 0; border-radius: 0 0 4px 4px; }
  .tabs .open { flex: 1; border-top-color: transparent; padding: 0 4px; }
  footer { height: 21px; line-height: 23px; padding-left: 4px; border-bottom: 4px solid #dce9f2; overflow: hidden; white-space: nowrap; }
  footer span { font-size: 13px; }
  footer .phone { font-size: 12px; }
</style>
